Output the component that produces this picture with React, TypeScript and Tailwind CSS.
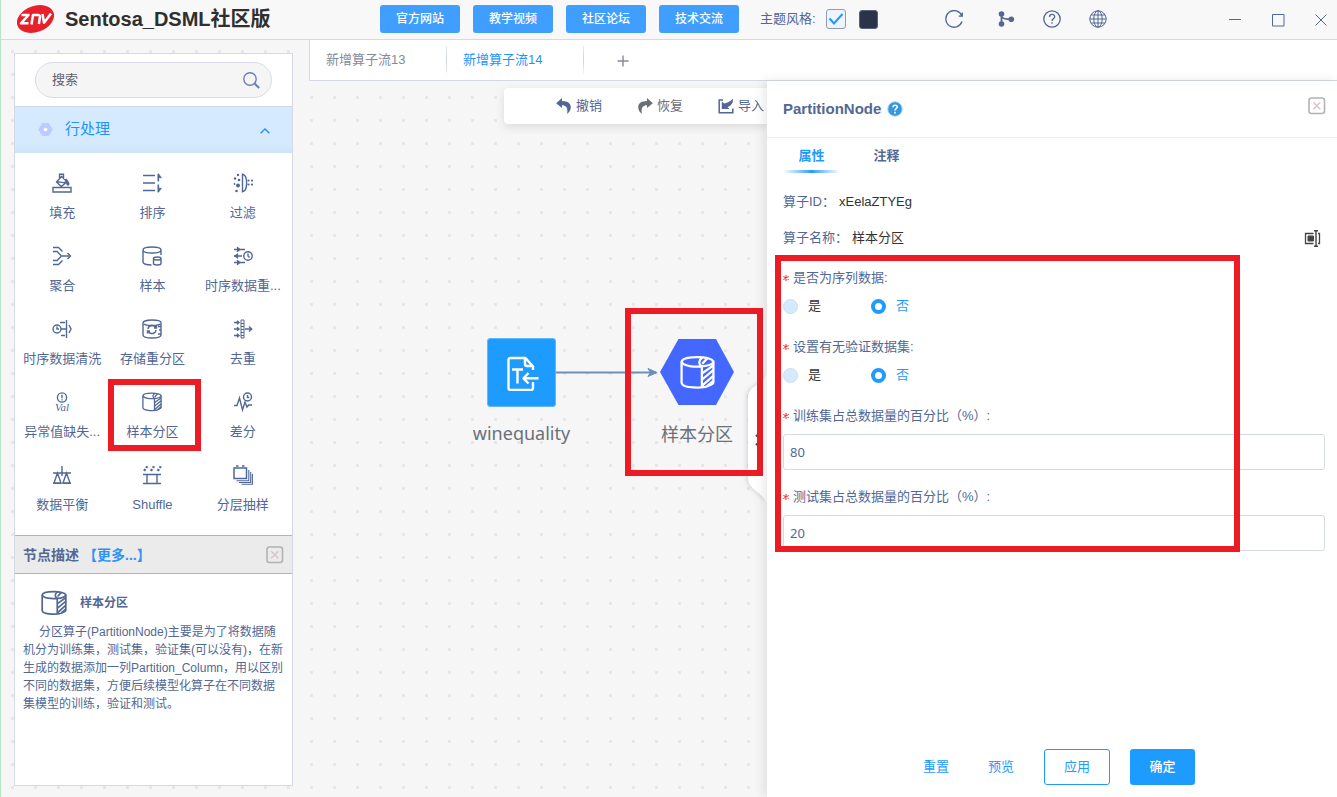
import React, { useState } from 'react';

type IconProps = { className?: string };

const Logo: React.FC = () => (
  <svg width="38" height="30" viewBox="0 0 38 30" aria-hidden="true">
    <ellipse cx="18.500" cy="15" rx="19.200" ry="13" transform="rotate(-20 18.500 15)" fill="#e8202c" />
    <g fill="none" stroke="#fff" strokeWidth="2.500" strokeLinejoin="round">
      <path d="M4.500 11h7l-7.500 8.300h7.500" />
      <path d="M14.500 20.500l1.500-9.500h5q2.200 0 1.900 2.200l-1 6.800" />
      <path d="M25.500 10l1.500 8.800 7-9.300" />
    </g>
  </svg>
);

const PartitionIcon: React.FC<IconProps> = ({ className }) => (
  <svg viewBox="0 0 20 20" className={className} fill="none" stroke="currentColor" strokeWidth="1.3" aria-hidden="true">
    <path d="M.9 3.800v12c0 3.200 13 3.600 16 1.400 1.500-.5 2.200-1 2.200-1.800V3.600C17 .3 1.600.4.900 3.800z" />
    <path d="M.9 3.800c.8 2.600 7.500 3.200 11.600 2.700V18.600M12.500 6.500c3.500-.3 6-1.200 6.600-2.600M12.500 6.500c-2-1.500-2.200-3.200.3-5.200" />
    <path d="M12.700 5l3-3.200M12.700 10.500L19 6M12.700 14L19 8.700M12.700 17.500l6.300-5.600M15.500 17.800l3.500-3" />
  </svg>
);

const icons: Record<string, React.ReactNode> = {
  fill: (
    <>
      <path d="M1 14.500h18V19H1z" />
      <path d="M7.500 6V1.200h4V6M9.500 3.500L4.500 9l4.800 4.600L15 8.700zM4.500 9.500c2-2 5 1.500 9.500-.5" />
      <path d="M14 6c1 2 3.500 3.500 2.700 5.500-.6.900-1.700.4-1.700-.7z" fill="currentColor" />
    </>
  ),
  sort: (
    <>
      <path d="M1 2.500h12M1 10h12M1 17.500h12" />
      <path d="M16.300.8v7.700M16.300 11.500v7.700" strokeWidth="1.600" />
      <path d="M16.500.8l3 4h-3zM16.500 19.200l3-4h-3z" fill="currentColor" strokeWidth=".6" />
    </>
  ),
  filter: (
    <>
      <path d="M9.500 1.200v17.600c5.500-1 5.500-16.600 0-17.600z" />
      <g fill="currentColor" stroke="none">
        <circle cx="5" cy="2" r="1.200" />
        <circle cx="2" cy="5.500" r="1.200" />
        <circle cx="6" cy="7" r="1.300" />
        <circle cx="5" cy="12.500" r="2" />
        <circle cx="1.500" cy="11" r=".9" />
        <circle cx="3.500" cy="18" r="1.300" />
        <circle cx="15.500" cy="7.500" r="1.100" />
        <circle cx="19" cy="7.500" r="1.100" />
        <circle cx="15.500" cy="11.500" r="1.100" />
        <circle cx="19" cy="11.500" r="1.100" />
      </g>
    </>
  ),
  aggregate: (
    <>
      <path d="M1 1.500h5.500l4 4M1 5.500h4L9.500 10 5 14.500H1M1 18.500h5.500l4-4M9.500 10H18" />
      <path d="M15.500 7l3 3-3 3" />
    </>
  ),
  sample: (
    <>
      <path d="M9.500 19c-5 0-8.500-1-8.500-3V4c0-4 18-4 18 0v5M1 4c0 4 18 4 18 0" />
      <path d="M11.500 12.500v5c0 2 7.500 2 7.500 0v-5c0-2-7.500-2-7.500 0zM11.500 12.500c0 2 7.500 2 7.500 0" />
    </>
  ),
  resample: (
    <>
      <path d="M1 3.500h11M1 10h8M1 16.500h11" />
      <path d="M4 1.200l2.800 2.300L4 5.800M5 7.700L2.200 10 5 12.300M4 14.200l2.800 2.300L4 18.800" fill="currentColor" />
      <circle cx="15" cy="10" r="4.200" />
      <path d="M15 7.500V10l1.500 1.500" />
    </>
  ),
  clean: (
    <>
      <circle cx="5" cy="10" r="4" />
      <path d="M5 7.500V10H7M9 10h5M8 3.500h5M9 16.500h4M14.500 1v18M17 6l2 4-2 4" />
    </>
  ),
  repartition: (
    <>
      <path d="M1 4v12c0 4 18 4 18 0V4c0-4-18-4-18 0zM2 5c2 2 14 2 16 0M19 7.500h-3M19 11h-2M19 15h-3" />
      <path d="M6 10c.2-4 6.500-5 8-1M14 11c-.2 4-6.500 5-8 1M14.500 6.500V9H12M5.500 14.500V12H8" />
    </>
  ),
  dedupe: (
    <>
      <path d="M8 1h3v18H8zM8 4.500h3M8 7.500h3M8 10.500h3M8 13.500h3M8 16.500h3" strokeWidth="1" />
      <path d="M1 3.500h5M1 10h5M1 16.500h5M4 1.800l2 1.700-2 1.700M4 8.300L6 10l-2 1.700M4 14.800l2 1.700-2 1.700M12 10h6.500M16 7.500l2.700 2.500-2.700 2.500" />
    </>
  ),
  missing: (
    <>
      <circle cx="10" cy="5.500" r="4.600" />
      <path d="M10 2.800v3.400M10 7.300v1.100" />
      <text x="10" y="19" textAnchor="middle" fontSize="11" fontStyle="italic" fontFamily="Liberation Serif, serif" fill="currentColor" stroke="none">
        Val
      </text>
    </>
  ),
  diff: (
    <>
      <path d="M1 13.500h3L6.500 6l3 12 2.500-8 2 5 1.500-2H19" />
      <circle cx="14.500" cy="5" r="4" />
      <path d="M14.500 3v2.500h1.800" />
    </>
  ),
  balance: (
    <>
      <path d="M10 1v10M1 8h18M5.500 8L2 18h7zM14.500 8L11 18h7zM1 18.300h8.500M10.500 18.300H19" />
    </>
  ),
  shuffle: (
    <>
      <path d="M1 9.500h18M1 18.500h18M5 9.500v9M15 9.500v9" />
      <path d="M2.200 6l1-2M4.300 3l.8-1.800M9 6l1-2M11.100 3l.8-1.800M15.800 6l1-2M17.900 3l.8-1.800" strokeWidth="2.300" />
    </>
  ),
  layered: (
    <>
      <path d="M1 3h12.500v10.500H1zM3 1h2.500M9 1h2.500" strokeWidth="1.500" />
      <path d="M3.500 15.700h12.300V5M6 17.500h11.700V7M8.500 19.300H19.400V9" strokeWidth="1.100" />
    </>
  ),
};

const operators = [
  { name: '填充', icon: 'fill' },
  { name: '排序', icon: 'sort' },
  { name: '过滤', icon: 'filter' },
  { name: '聚合', icon: 'aggregate' },
  { name: '样本', icon: 'sample' },
  { name: '时序数据重...', icon: 'resample' },
  { name: '时序数据清洗', icon: 'clean' },
  { name: '存储重分区', icon: 'repartition' },
  { name: '去重', icon: 'dedupe' },
  { name: '异常值缺失...', icon: 'missing' },
  { name: '样本分区', icon: 'partition' },
  { name: '差分', icon: 'diff' },
  { name: '数据平衡', icon: 'balance' },
  { name: 'Shuffle', icon: 'shuffle' },
  { name: '分层抽样', icon: 'layered' },
];

const links = ['官方网站', '教学视频', '社区论坛', '技术交流'];

const CloseBox: React.FC = () => (
  <button type="button" aria-label="关闭" className="shrink-0">
    <svg width="18" height="18" viewBox="0 0 18 18" fill="none" aria-hidden="true">
      <rect x="1" y="1" width="15.500" height="15.500" rx="2.500" stroke="#b3b3b3" strokeWidth="1.600" />
      <path d="M5.300 5.300l7 7M12.300 5.300l-7 7" stroke="#d8c4c4" strokeWidth="1.400" />
    </svg>
  </button>
);

const Header: React.FC = () => {
  const [light, setLight] = useState(true);

  return (
    <header className="flex h-10 shrink-0 items-center border-b border-[#d5d9e6] bg-[#f8f8f8] text-[#526795]">
      <div className="flex w-[379px] shrink-0 items-center gap-[10px] pb-0.5 pl-4">
        <Logo />
        <h1 className="text-[20px] leading-6 font-bold text-[#2f2f2f]">Sentosa_DSML社区版</h1>
      </div>

      <nav className="flex shrink-0 gap-[13px] pb-px">
        {links.map((link) => (
          <a
            key={link}
            href="#"
            className="flex h-7 w-20 items-center justify-center rounded-[3px] bg-[#409eff] text-xs font-medium text-white"
          >
            {link}
          </a>
        ))}
      </nav>

      <div className="ml-[21px] flex shrink-0 items-center pb-px">
        <label htmlFor="theme" className="w-[66px] text-[13px] leading-5">
          主题风格:
        </label>
        <span className="relative flex">
          <input
            id="theme"
            type="checkbox"
            checked={light}
            onChange={() => setLight(!light)}
            className="peer size-5 appearance-none rounded-[3px] border border-[#8e9bbd] bg-[#eef3fc]"
          />
          <svg viewBox="0 0 20 20" className="pointer-events-none absolute inset-0 hidden size-5 peer-checked:block" fill="none" stroke="#1e9bff" strokeWidth="2" aria-hidden="true">
            <path d="M3.500 9.500l4.500 5L16.500 5" />
          </svg>
        </span>
        <button type="button" aria-label="深色主题" className="ml-[13px] size-[19px] rounded-[3px] border border-[#59637d] bg-[#2a3348]" />
      </div>

      <div className="ml-[67px] flex shrink-0 items-center gap-7 pb-0.5">
        <button type="button" aria-label="刷新" className="mr-1.5">
          <svg width="18" height="18" viewBox="0 0 18 18" fill="none" stroke="currentColor" strokeWidth="1.300" aria-hidden="true">
            <path d="M16.900 6A8.300 8.300 0 1 0 17 11.500M17.300 2.500v3.700h-3.600" />
          </svg>
        </button>
        <button type="button" aria-label="流程">
          <svg width="18" height="18" viewBox="0 0 18 18" fill="currentColor" aria-hidden="true">
            <circle cx="4.500" cy="4" r="2.800" />
            <circle cx="4.500" cy="14" r="2.800" />
            <circle cx="14.300" cy="9.300" r="2.800" />
            <path d="M4.500 4v10M4.500 6.500c1 2.500 4 2.800 9.500 2.800" fill="none" stroke="currentColor" strokeWidth="1.800" />
          </svg>
        </button>
        <button type="button" aria-label="帮助">
          <svg width="18" height="18" viewBox="0 0 18 18" fill="none" stroke="currentColor" strokeWidth="1.300" aria-hidden="true">
            <circle cx="9" cy="9" r="8.200" />
            <path d="M6.500 7c0-3.400 5.200-3.400 5.200-.3 0 2-2.700 1.900-2.700 4.300M9 12.300v1.500" />
          </svg>
        </button>
        <button type="button" aria-label="语言">
          <svg width="18" height="18" viewBox="0 0 18 18" fill="none" stroke="currentColor" aria-hidden="true">
            <circle cx="9" cy="9" r="8.200" />
            <ellipse cx="9" cy="9" rx="4.200" ry="8.200" />
            <path d="M9 .8v16.400M.8 9h16.400M2 5h14M2 13h14" />
          </svg>
        </button>
      </div>

      <div className="ml-auto flex shrink-0 items-center gap-[29px] pr-[9px]">
        <button type="button" aria-label="最小化">
          <svg width="14" height="14" viewBox="0 0 14 14" fill="none" stroke="currentColor" aria-hidden="true">
            <path d="M1 6.500h12" />
          </svg>
        </button>
        <button type="button" aria-label="最大化">
          <svg width="14" height="14" viewBox="0 0 14 14" fill="none" stroke="currentColor" aria-hidden="true">
            <path d="M1.500 1.500h11.500v11.500H1.500z" />
          </svg>
        </button>
        <button type="button" aria-label="关闭窗口">
          <svg width="14" height="14" viewBox="0 0 14 14" fill="none" stroke="currentColor" aria-hidden="true">
            <path d="M1.500 1.500l11 11M12.500 1.500l-11 11" />
          </svg>
        </button>
      </div>
    </header>
  );
};

const Sidebar: React.FC = () => (
  <aside className="mt-[13px] mb-[11px] ml-[13px] flex w-[279px] shrink-0 flex-col overflow-hidden border border-[#d5d9e6] bg-white text-[#526795]">
    <div className="border-b border-[#d5d9e6] px-5 py-2">
      <div className="flex h-9 items-center rounded-[18px] border border-[#d9dce8] bg-[#f5f5f5] pr-[11px] pl-4">
        <input
          type="text"
          aria-label="搜索"
          placeholder="搜索"
          className="min-w-0 flex-1 bg-transparent text-[13px] leading-5 outline-none placeholder:text-[#5e616c]"
        />
        <svg width="17" height="17" viewBox="0 0 17 17" fill="none" stroke="#6b80b3" strokeWidth="1.400" aria-hidden="true">
          <circle cx="7" cy="7" r="6.200" />
          <path d="M11.300 11.300l4.900 4.700" strokeWidth="2" />
        </svg>
      </div>
    </div>

    <button type="button" className="flex h-[46px] shrink-0 items-center bg-linear-to-b from-[#d6eaff] from-80% to-[#d0e4f9] pr-[22px] pb-0.5 pl-[23px] text-[15px] leading-6 text-[#1e93ff]">
      <svg width="15" height="15" viewBox="0 0 15 15" fill="#bfcbff" aria-hidden="true">
        <path d="M4.200 1h6.600l4 6.500-4 6.500H4.200l-4-6.500z" />
        <circle cx="7.500" cy="7.500" r="1.800" fill="#fff" />
      </svg>
      <span className="ml-3">行处理</span>
      <svg className="mt-1 ml-auto" width="10" height="6" viewBox="0 0 10 6" fill="none" stroke="currentColor" strokeWidth="1.400" aria-hidden="true">
        <path d="M.6 5.300L5 1l4.400 4.300" />
      </svg>
    </button>

    <div className="grid shrink-0 grid-cols-3 pr-1 pb-[17px] pl-0.5">
      {operators.map(({ name, icon }) => (
        <button key={name} type="button" className="relative flex h-[73px] flex-col items-center gap-[11px] pt-5">
          {icon === 'partition' ? (
            <PartitionIcon className="size-5" />
          ) : (
            <svg width="20" height="20" viewBox="0 0 20 20" fill="none" stroke="currentColor" strokeWidth="1.400" aria-hidden="true">
              {icons[icon]}
            </svg>
          )}
          <span className="text-[13px] leading-[18px] whitespace-nowrap">{name}</span>
          {icon === 'partition' && (
            <span className="absolute top-[7px] left-px z-10 h-[72px] w-[93px] border-[6px] border-[#ed1c24]" />
          )}
        </button>
      ))}
    </div>

    <div className="flex h-[39px] shrink-0 items-center border-y border-[#b1b6b1] bg-[#ebebeb] pr-2 pl-2 text-sm font-bold">
      <span>节点描述</span>
      <a href="#" className="ml-1 text-[#2e93f5]">
        【更多...】
      </a>
      <span className="ml-auto flex">
        <CloseBox />
      </span>
    </div>

    <section className="min-h-0 flex-1 px-2 pt-4 text-xs leading-[18px]">
      <h2 className="flex items-center gap-[13px] pl-[18px] font-bold">
        <PartitionIcon className="size-[26px]" />
        样本分区
      </h2>
      <p className="mt-[7px] indent-4">
        分区算子(PartitionNode)主要是为了将数据随机分为训练集，测试集，验证集(可以没有)，在新生成的数据添加一列Partition_Column，用以区别不同的数据集，方便后续模型化算子在不同数据集模型的训练，验证和测试。
      </p>
    </section>
  </aside>
);

const FlowTabs: React.FC = () => (
  <div className="flex h-[41px] shrink-0 items-center border-b border-l border-[#d5d9e6] bg-white text-[13px]">
    {['新增算子流13', '新增算子流14'].map((tab, i) => (
      <React.Fragment key={tab}>
        <button
          type="button"
          className={`h-9 w-[136px] shrink-0 pl-4 text-left ${i === 1 ? 'text-[#1e93ff]' : 'text-[#858a99]'}`}
        >
          {tab}
        </button>
        <span className="h-7 w-px bg-linear-to-b from-[#e8eaf2] via-[#cdd2e2] to-[#f3f4f8]" />
      </React.Fragment>
    ))}
    <button type="button" aria-label="新增" className="mt-0.5 ml-[33px] text-[#858a99]">
      <svg width="12" height="12" viewBox="0 0 12 12" fill="none" stroke="currentColor" strokeWidth="1.400" aria-hidden="true">
        <path d="M6 .5v11M.5 6h11" />
      </svg>
    </button>
  </div>
);

const Canvas: React.FC = () => (
  <section className="relative min-w-0 flex-1 overflow-hidden">
    <div className="mt-[7px] ml-[195px] flex h-9 items-center gap-[35px] rounded-l bg-white pl-[52px] text-[13px] whitespace-nowrap text-[#526795] shadow-[0_3px_8px_rgba(60,60,60,0.14)]">
      <button type="button" className="flex shrink-0 items-center gap-1">
        <svg width="16" height="16" viewBox="0 0 16 16" fill="currentColor" aria-hidden="true">
          <path d="M6 0L.2 5.200 6 10V7.300c4.500-.2 6.300 3.500 5 8.700 5.500-4 6-13-5-13z" />
        </svg>
        撤销
      </button>
      <button type="button" className="flex shrink-0 items-center gap-1 text-[#6a6e79]">
        <svg width="16" height="16" viewBox="0 0 16 16" fill="currentColor" aria-hidden="true">
          <path d="M10 0l5.800 5.200L10 10V7.300c-4.500-.2-6.300 3.500-5 8.700C-.5 12-1 3 10 3z" />
        </svg>
        恢复
      </button>
      <button type="button" className="flex shrink-0 items-center gap-1">
        <svg width="16" height="16" viewBox="0 0 16 16" aria-hidden="true">
          <path d="M5 2H1.200v12.800h13.600V10.500" fill="none" stroke="currentColor" strokeWidth="1.500" />
          <path d="M3.800 11V3.500l2.400 2C9 5 12 3.800 15 .8 15.300 5 13 8 9.500 9.200l2 1.800z" fill="currentColor" />
        </svg>
        导入
      </button>
    </div>

    {/* Connection and nodes */}
    <svg className="absolute top-[286px] left-[247px]" width="102" height="11" viewBox="0 0 102 11" fill="none" stroke="#6b90ba" strokeWidth="2" aria-hidden="true">
      <path d="M0 5.500h100" />
      <path d="M92 1.500l9 4-9 4 2.500-4z" fill="#6b90ba" strokeWidth="1" />
    </svg>
    <div className="absolute top-[257px] left-[152px] flex w-[121px] flex-col items-center font-['Noto_Sans','Noto_Sans_CJK_SC',sans-serif] text-lg text-[#6b6f7c]">
      <span className="flex size-[69px] items-center justify-center rounded-[3px] border border-[#62b8fb] bg-[#1e9bff]">
        <svg width="36" height="36" viewBox="0 0 36 36" fill="none" stroke="#fff" strokeWidth="2.400" strokeLinejoin="round" aria-hidden="true">
          <path d="M29 15v-3.500L21.500 3H6.500Q4.500 3 4.500 5v28q0 2 2 2H27q2 0 2-2v-6M21 3v6q0 2 2 2h6" />
          <path d="M8 14.500h11M13.500 14.500V28.500" />
          <path d="M34.500 23.300H19.500M24.500 18l-5 5.300 5 5.200" />
        </svg>
      </span>
      <span className="mt-3">winequality</span>
    </div>
    <div className="absolute top-[258px] left-[328px] flex w-[120px] flex-col items-center text-lg text-[#6b6f7c]">
      <span className="grid place-items-center">
        <svg className="col-start-1 row-start-1" width="74" height="66" viewBox="0 0 74 66" fill="#4468ff" aria-hidden="true">
          <path d="M18.500 0h37.500L74 33 56 66H18.500L0 33z" />
        </svg>
        <PartitionIcon className="col-start-1 row-start-1 size-[35px] text-white" />
      </span>
      <span className="mt-4">样本分区</span>
    </div>

    {/* Panel handle */}
    <button type="button" aria-label="收起" className="absolute top-[285px] right-0 drop-shadow-[-2px_0_2px_rgba(80,90,130,0.18)]">
      <svg width="19" height="140" viewBox="0 0 19 140" fill="#fff" aria-hidden="true">
        <path d="M19 3C18 13 14 16 9 19 3 22 0 26 0 32v78c0 8 3 11 8 15s9 7 11 12z" />
        <path d="M8 69l5 5-5 5" fill="none" stroke="#3c4152" strokeWidth="1.800" />
      </svg>
    </button>
    <span className="pointer-events-none absolute top-[227px] left-[316px] h-[168px] w-[138px] border-[6px] border-[#ed1c24]" />
  </section>
);

const Required: React.FC = () => (
  <svg className="mr-1 inline-block" width="6" height="6" viewBox="0 0 6 6" stroke="#f5353b" strokeWidth="1.100" aria-hidden="true">
    <path d="M3 0v6M.3 1.400l5.400 3.200M5.700 1.400L.3 4.600" />
  </svg>
);

type YesNoProps = { label: string; name: string };

const YesNo: React.FC<YesNoProps> = ({ label, name }) => {
  const [value, setValue] = useState('否');

  return (
    <fieldset>
      <legend className="flex h-7 items-center">
        <Required />
        {label}
      </legend>
      <div className="flex h-7 items-center">
        {['是', '否'].map((option) => (
          <label
            key={option}
            className={`flex w-[88px] items-center gap-[10px] ${value === option ? 'text-[#1e9bff]' : 'text-[#333]'}`}
          >
            <input
              type="radio"
              name={name}
              value={option}
              checked={value === option}
              onChange={() => setValue(option)}
              className="size-[15px] appearance-none rounded-full border border-[#cddcf0] bg-[#d6eaff] checked:border-4 checked:border-[#1e9bff] checked:bg-white"
            />
            {option}
          </label>
        ))}
      </div>
    </fieldset>
  );
};

type PercentFieldProps = { id: string; label: string; initial: string };

const PercentField: React.FC<PercentFieldProps> = ({ id, label, initial }) => (
  <div className="flex flex-col">
    <label htmlFor={id} className="mb-1 flex h-7 items-center">
      <Required />
      {label}
    </label>
    <input
      id={id}
      type="text"
      defaultValue={initial}
      className="h-9 rounded-[3px] border border-[#d5d9e6] bg-white px-1.5 font-['Noto_Sans',sans-serif] outline-none"
    />
  </div>
);

const PropertyPanel: React.FC = () => (
  <aside className="relative z-10 flex w-[570px] shrink-0 flex-col bg-white text-[13px] text-[#526795] shadow-[-3px_0_10px_rgba(60,60,60,0.12)]">
    <div className="flex h-[57px] shrink-0 items-center border-b border-[#ededed] pr-[11px] pb-px pl-4">
      <h2 className="text-[15px] leading-5 font-bold">PartitionNode</h2>
      <button type="button" aria-label="帮助" className="ml-1.5">
        <svg width="16" height="16" viewBox="0 0 16 16" fill="none" aria-hidden="true">
          <circle cx="8" cy="8" r="7.200" fill="#3598dc" stroke="#9fd0f3" />
          <path d="M6 6.300c0-2.700 4.200-2.600 4.200-.2C10.200 7.600 8 7.600 8 9.500M8 10.800v1.600" stroke="#fff" strokeWidth="1.600" />
        </svg>
      </button>
      <span className="mb-[5px] ml-auto flex">
        <CloseBox />
      </span>
    </div>

    <div className="flex min-h-0 flex-1 flex-col pr-3 pl-4">
      <div className="flex gap-[18px] font-bold">
        <button type="button" className="flex h-[35px] w-[57px] flex-col items-center text-[#1e9bff]">
          <span className="h-8 shrink-0 pt-0.5 leading-8">属性</span>
          <span className="h-[3px] w-full shrink-0 bg-linear-to-r from-white via-[#1e9bff] to-white" />
        </button>
        <button type="button" className="flex h-[35px] w-[57px] flex-col items-center">
          <span className="h-8 shrink-0 pt-0.5 leading-8">注释</span>
        </button>
      </div>

      <dl className="mt-[11px] text-[#333]">
        <div className="flex h-9 items-center">
          <dt className="text-[#526795]">算子ID：</dt>
          <dd className="ml-1">xEelaZTYEg</dd>
        </div>
        <div className="flex h-9 items-center">
          <dt className="text-[#526795]">算子名称：</dt>
          <dd className="ml-1">样本分区</dd>
          <dd className="ml-auto flex pr-1">
            <button type="button" aria-label="重命名">
              <svg width="17" height="17" viewBox="0 0 17 17" fill="none" stroke="#444" aria-hidden="true">
                <path d="M9.500 3.500h-8v10h8M14 3.500h1.500v10H14" strokeWidth="1.300" />
                <path d="M4 6h5.500v5H4z" fill="#444" />
                <path d="M10 .8h4M10 16.200h4M12 .8v15.400" strokeWidth="1.400" />
              </svg>
            </button>
          </dd>
        </div>
      </dl>

      <form className="mt-2 flex flex-col gap-[13px]">
        <YesNo label="是否为序列数据:" name="sequence" />
        <YesNo label="设置有无验证数据集:" name="validation" />
        <PercentField id="train" label="训练集占总数据量的百分比（%）:" initial="80" />
        <PercentField id="test" label="测试集占总数据量的百分比（%）:" initial="20" />
      </form>
    </div>

    <footer className="flex shrink-0 items-center justify-end gap-5 pr-[142px] pb-3 text-[#1e9bff]">
      <button type="button" className="mr-[19px]">
        重置
      </button>
      <button type="button" className="mr-[10px]">
        预览
      </button>
      <button type="button" className="h-9 w-[66px] rounded-[3px] border border-[#1e9bff]">
        应用
      </button>
      <button type="button" className="h-9 w-[65px] rounded-[3px] bg-[#1e9bff] font-medium text-white">
        确定
      </button>
    </footer>

    <span className="pointer-events-none absolute top-[174px] left-2 h-[297px] w-[465px] border-[6px] border-[#ed1c24]" />
  </aside>
);

const App: React.FC = () => {
  return (
    <div className="flex h-screen flex-col overflow-hidden border-l border-[#b5e6c8] bg-[#f6f6f6] font-['Liberation_Sans','Noto_Sans_CJK_SC',sans-serif]">
      <Header />
      <main className="flex min-h-0 flex-1 bg-[radial-gradient(circle,#e7e7e9_1.5px,transparent_1.5px)] bg-[size:23px_23px]">
        <Sidebar />
        <div className="ml-4 flex min-w-0 flex-1 flex-col">
          <FlowTabs />
          <div className="flex min-h-0 flex-1">
            <Canvas />
            <PropertyPanel />
          </div>
        </div>
      </main>
    </div>
  );
};

export default App;
